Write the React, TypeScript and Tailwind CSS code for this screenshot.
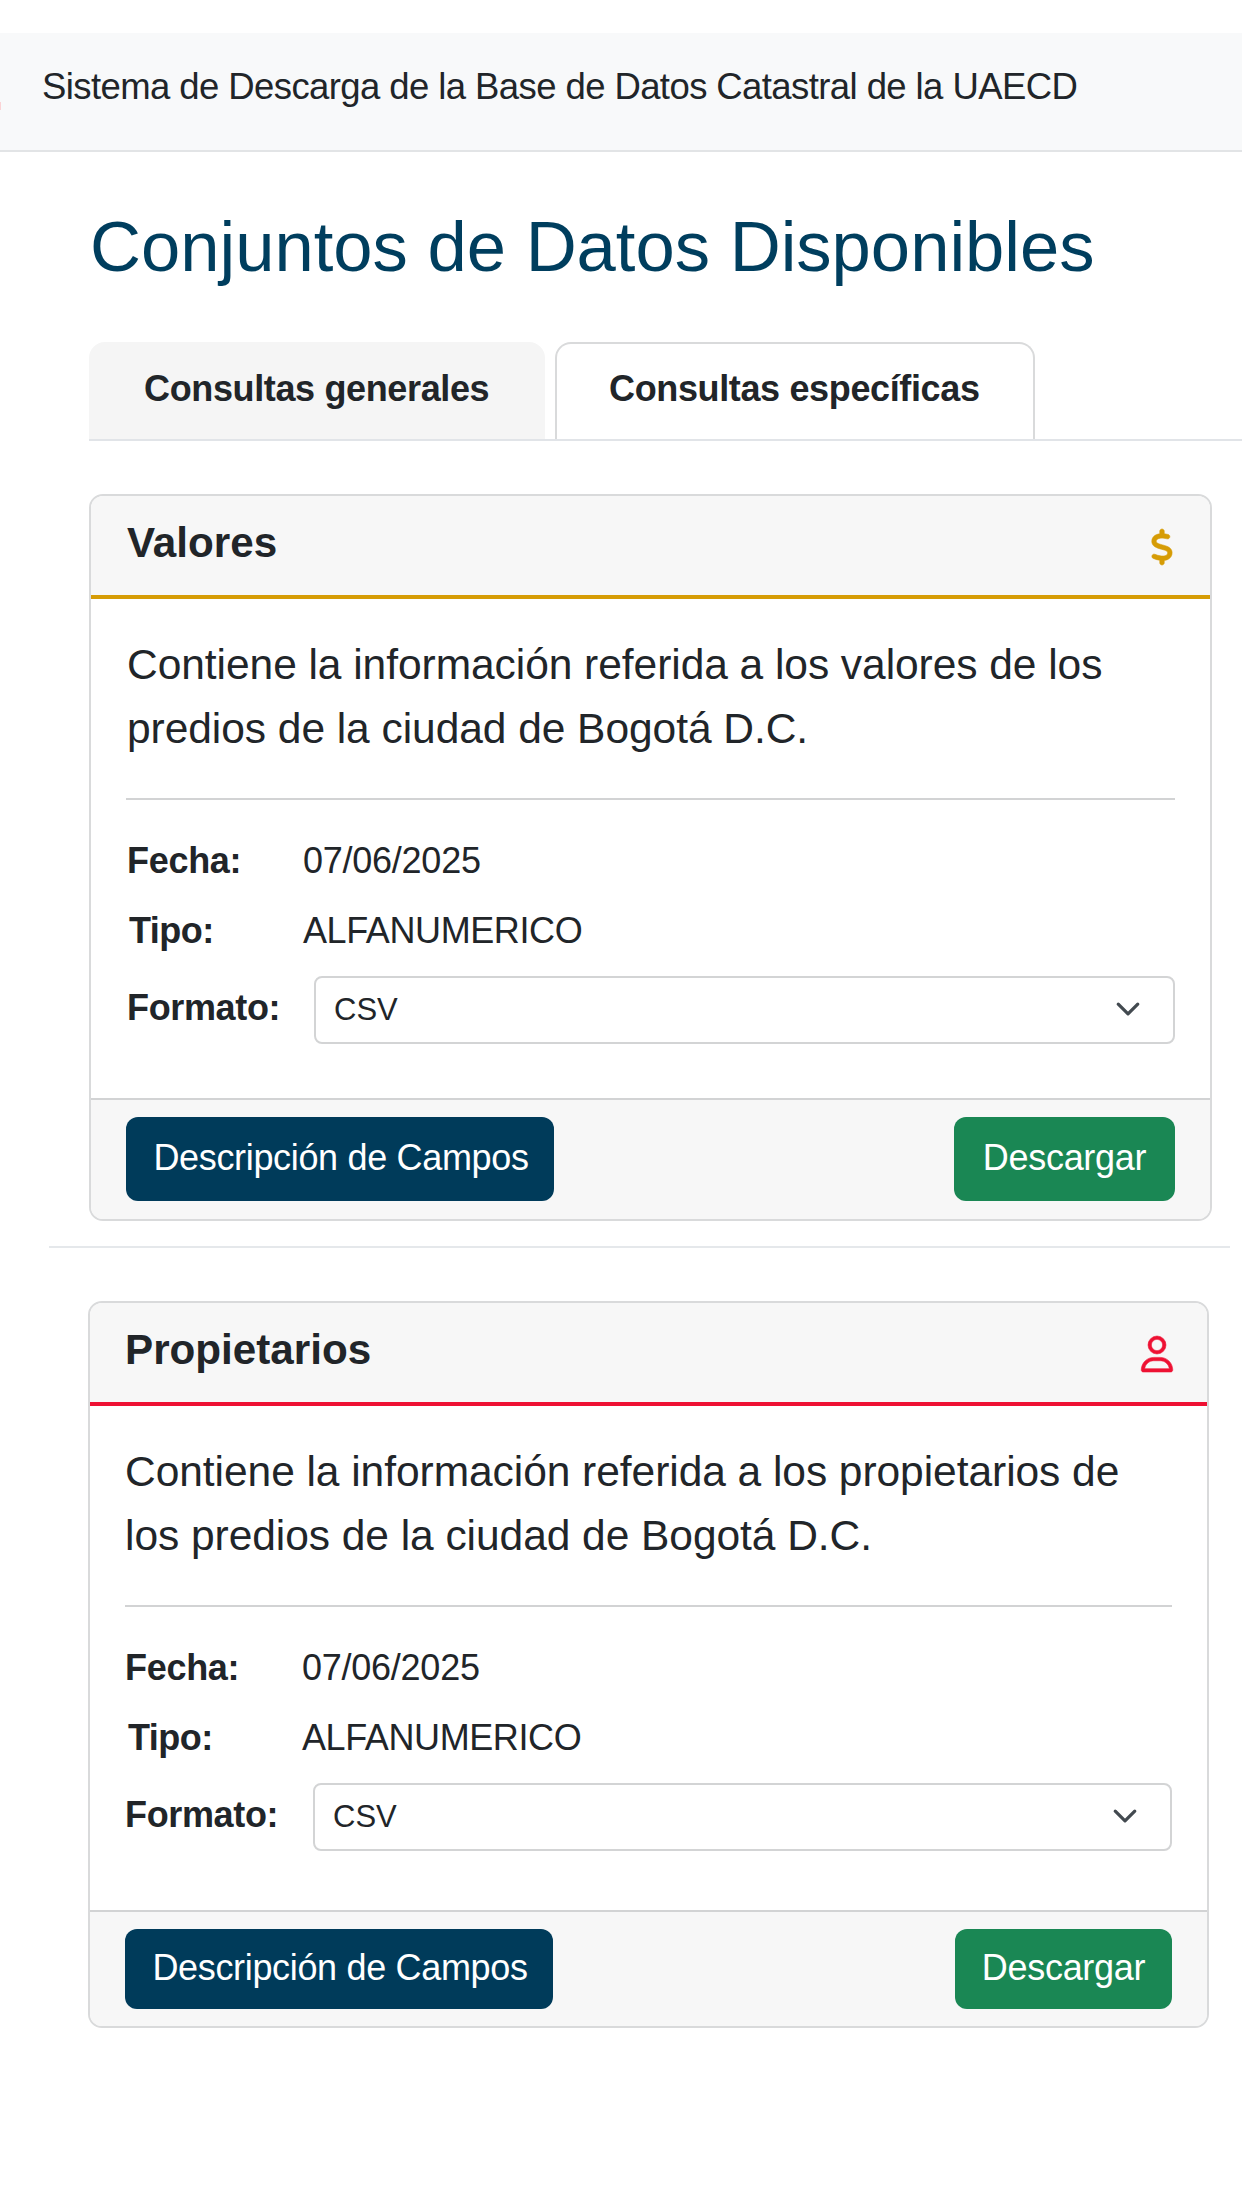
import { clsx } from "clsx";
import type { IconType } from "react-icons";
import { FaDollarSign, FaRegUser } from "react-icons/fa6";

interface Dataset {
    title: string;
    description: string;
    date: string;
    type: string;
    format: string;
    icon: IconType;
    iconClass: string;
    headerBorder: string;
    cardSize: string;
    bodySize: string;
    textIndent: string;
    buttonSize: string;
    downloadSize: string;
}

const datasets: Dataset[] = [
    {
        title: "Valores",
        description: "Contiene la información referida a los valores de los predios de la ciudad de Bogotá D.C.",
        date: "07/06/2025",
        type: "ALFANUMERICO",
        format: "CSV",
        icon: FaDollarSign,
        iconClass: "-mr-[5px] text-[#d69c05]",
        headerBorder: "border-[#d69c05]",
        cardSize: "ml-[89px] w-[1123px]",
        bodySize: "h-[499px]",
        textIndent: "pl-px",
        buttonSize: "h-[84px]",
        downloadSize: "w-[221px]"
    },
    {
        title: "Propietarios",
        description: "Contiene la información referida a los propietarios de los predios de la ciudad de Bogotá D.C.",
        date: "07/06/2025",
        type: "ALFANUMERICO",
        format: "CSV",
        icon: FaRegUser,
        iconClass: "-mr-[3px] text-[#ee1133]",
        headerBorder: "border-[#ee1133]",
        cardSize: "ml-[88px] w-[1121px]",
        bodySize: "h-[504px]",
        textIndent: "pl-0",
        buttonSize: "h-[80px]",
        downloadSize: "w-[217px]"
    }
];

const tabs = [
    { label: "Consultas generales", className: "w-[456px] bg-[#f5f5f5] border-transparent pl-[53px]" },
    { label: "Consultas específicas", className: "w-[480px] bg-white border-[#d9dadb] pl-[52px]" }
];

function Header() {
    return (
        <header className="mt-[33px] flex h-[119px] border-b-2 border-[#e2e4e6] bg-[#f8f9fa]">
            {/* edge of the logo, the rest is scrolled out */}
            <span className="mt-[69px] h-2 w-px bg-[#fbd3d5]"></span>
            <span className="ml-[41px] text-[36.5px] leading-[108px] tracking-[-0.59px] whitespace-nowrap">
                Sistema de Descarga de la Base de Datos Catastral de la UAECD
            </span>
        </header>
    );
}

function Tabs() {
    return (
        <div className="mt-[51px] ml-[89px] flex h-[99px] gap-[10px] border-b-2 border-[#e1e4e8]">
            {tabs.map((tab) => (
                <button
                    key={tab.label}
                    className={clsx(
                        "h-[97px] rounded-t-[16px] border-2 border-b-0 pb-[5px] text-left text-[36px] font-bold tracking-[-0.36px] whitespace-nowrap",
                        tab.className
                    )}
                >
                    {tab.label}
                </button>
            ))}
        </div>
    );
}

function DatasetCard({ dataset }: { dataset: Dataset }) {
    const Icon = dataset.icon;

    return (
        <div className={clsx("h-[727px] overflow-hidden rounded-[14px] border-2 border-[#d9dadb] bg-white", dataset.cardSize)}>
            <div className={clsx("flex h-[103px] items-start justify-between border-b-4 bg-[#f7f7f7] px-[35px]", dataset.headerBorder)}>
                <h3 className={clsx("text-[42.2px] leading-[94px] font-bold", dataset.textIndent)}>{dataset.title}</h3>
                <Icon className={clsx("mt-[33px] h-9 w-auto overflow-visible", dataset.iconClass)} strokeWidth={8} />
            </div>

            <div className={clsx("px-[35px] pt-[34px] text-[36px]", dataset.bodySize)}>
                <p className={clsx("text-[42.5px] leading-[64px] tracking-[-0.05px]", dataset.textIndent)}>{dataset.description}</p>
                <hr className="mt-[37px] border-t-2 border-[#d2d3d4]" />

                <div className="mt-[26px] flex leading-[70px]">
                    <span className={clsx("w-[177px] font-bold tracking-[-0.3px]", dataset.textIndent)}>Fecha:</span>
                    <span className="tracking-[-0.25px]">{dataset.date}</span>
                </div>
                <div className="flex leading-[70px]">
                    <span className="w-[177px] pl-[3px] font-bold tracking-[-0.5px]">Tipo:</span>
                    <span className="tracking-[-0.4px]">{dataset.type}</span>
                </div>
                <div className="mt-[10px] flex">
                    <span className={clsx("w-[188px] leading-[64px] font-bold tracking-[-0.35px]", dataset.textIndent)}>Formato:</span>
                    <div className="flex h-[68px] flex-1 items-center justify-between rounded-[8px] border-2 border-[#d3d4d5] bg-white pr-[32px] pl-[18px]">
                        <span className="text-[31px]">{dataset.format}</span>
                        <svg className="mb-[2px] size-[26px]" viewBox="0 0 16 16" fill="none">
                            <path d="m2 5 6 6 6-6" stroke="#434a50" strokeWidth="2" strokeLinecap="round" strokeLinejoin="round" />
                        </svg>
                    </div>
                </div>
            </div>

            <div className="flex h-full items-start justify-between border-t-2 border-[#d2d3d4] bg-[#f7f7f7] px-[35px] pt-[17px] text-[36px] text-white">
                <button className={clsx("w-[428px] rounded-[12px] bg-[#003b5a] pb-[2px] pl-[2px] tracking-[-0.33px]", dataset.buttonSize)}>
                    Descripción de Campos
                </button>
                <button className={clsx("rounded-[12px] bg-[#1a8754] pb-[2px] tracking-[-0.3px]", dataset.buttonSize, dataset.downloadSize)}>
                    Descargar
                </button>
            </div>
        </div>
    );
}

export default function App() {
    return (
        <div className="flow-root min-h-[2208px] w-[1242px] overflow-hidden bg-white font-['Liberation_Sans',Arial,sans-serif] text-[#212529]">
            <Header />
            <main className="pt-[51px]">
                <h1 className="ml-[90px] text-[70.6px] leading-[88px] text-[#003e5e]">Conjuntos de Datos Disponibles</h1>
                <Tabs />
                <section className="mt-[53px]">
                    <DatasetCard dataset={datasets[0]} />
                    <hr className="mt-[25px] mr-[12px] mb-[53px] ml-[49px] border-t-2 border-[#e5e8eb]" />
                    <DatasetCard dataset={datasets[1]} />
                </section>
            </main>
        </div>
    );
}
